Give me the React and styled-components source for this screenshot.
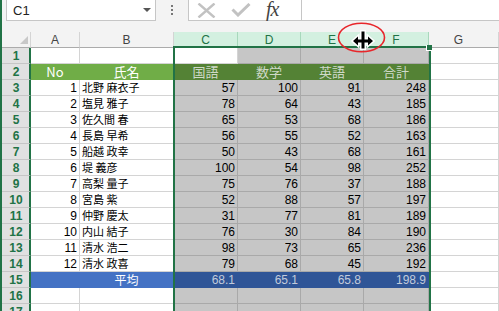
import React from 'react';
import styled, { createGlobalStyle } from 'styled-components';

// excel-ish palette
const XL_GREEN = '#217346';

const GlobalStyle = createGlobalStyle`
  html, body {
    margin: 0;
    padding: 0;
    background: #ffffff;
    overflow: hidden;
  }
`;

const students = [
  [1, '北野 麻衣子', 57, 100, 91, 248],
  [2, '塩見 雅子', 78, 64, 43, 185],
  [3, '佐久間 春', 65, 53, 68, 186],
  [4, '長島 早希', 56, 55, 52, 163],
  [5, '船越 政幸', 50, 43, 68, 161],
  [6, '堤 義彦', 100, 54, 98, 252],
  [7, '高梨 量子', 75, 76, 37, 188],
  [8, '宮島 紫', 52, 88, 57, 197],
  [9, '仲野 慶太', 31, 77, 81, 189],
  [10, '内山 結子', 76, 30, 84, 190],
  [11, '清水 浩二', 98, 73, 65, 236],
  [12, '清水 政喜', 79, 68, 45, 192],
];

const subjects = ['国語', '数学', '英語', '合計'];
const averages = ['68.1', '65.1', '65.8', '198.9'];
const columns = ['A', 'B', 'C', 'D', 'E', 'F', 'G'];
const selectedCols = ['C', 'D', 'E', 'F'];

const tones = {
  plain: { bg: '#ffffff', line: '#d4d4d4', fg: '#000000' },
  sel: { bg: '#c6c6c6', line: '#a9a9a9', fg: '#000000' },
  head: { bg: '#70ad47', line: '#70ad47', fg: '#ffffff' },
  headSel: { bg: '#548235', line: '#548235', fg: '#cfd9c8' },
  avg: { bg: '#4472c4', line: '#4472c4', fg: '#ffffff' },
  avgSel: { bg: '#2f5597', line: '#2f5597', fg: '#c2cbdb' },
};

const App = () => {
  const row = (n, cells) => (
    <React.Fragment key={n}>
      <RowHead>{n}</RowHead>
      {cells}
    </React.Fragment>
  );

  const selBlank = (n) =>
    [0, 1, 2, 3].map((i) => <Cell key={`${n}-s${i}`} $tone="sel" />);

  const rows = [];

  // row 1 : C1 is the active cell
  rows.push(
    row(1, [
      <Cell key="1a" />,
      <Cell key="1b" />,
      <Cell key="1c" />,
      <Cell key="1d" $tone="sel" />,
      <Cell key="1e" $tone="sel" />,
      <Cell key="1f" $tone="sel" />,
      <Cell key="1g" />,
    ])
  );

  // row 2 : headings
  rows.push(
    row(2, [
      <Cell key="2a" $tone="head" $align="center" $size="big">No</Cell>,
      <Cell key="2b" $tone="head" $align="center" $size="big">氏名</Cell>,
      ...subjects.map((s) => (
        <Cell key={`2-${s}`} $tone="headSel" $align="center" $size="big">{s}</Cell>
      )),
      <Cell key="2g" />,
    ])
  );

  students.forEach((s, i) => {
    const n = i + 3;
    rows.push(
      row(n, [
        <Cell key={`${n}a`} $align="right">{s[0]}</Cell>,
        <Cell key={`${n}b`} $size="jp">{s[1]}</Cell>,
        ...s.slice(2).map((v, j) => (
          <Cell key={`${n}-${j}`} $tone="sel" $align="right">{v}</Cell>
        )),
        <Cell key={`${n}g`} />,
      ])
    );
  });

  // row 15 : averages
  rows.push(
    row(15, [
      <Cell key="15a" $tone="avg" />,
      <Cell key="15b" $tone="avg" $align="center" $size="mid">平均</Cell>,
      ...averages.map((v) => (
        <Cell key={`15-${v}`} $tone="avgSel" $align="right">{v}</Cell>
      )),
      <Cell key="15g" />,
    ])
  );

  [16, 17].forEach((n) => {
    rows.push(
      row(n, [<Cell key={`${n}a`} />, <Cell key={`${n}b`} />, ...selBlank(n), <Cell key={`${n}g`} />])
    );
  });

  return (
    <>
      <GlobalStyle />
      <Window>
        <FormulaBar>
          <NameBox>
            C1
            <DropArrow />
          </NameBox>
          <Grip>
            <span />
            <span />
            <span />
          </Grip>
          <FxButtons>
            <svg width="19" height="15" viewBox="0 0 19 15">
              <path d="M1.5 0.5 L17.5 14.5 M17.5 0.5 L1.5 14.5" stroke="#c2c2c2" strokeWidth="2.4" fill="none" />
            </svg>
            <svg width="20" height="14" viewBox="0 0 20 14">
              <path d="M1.5 6.5 L7 12 L18.5 1" stroke="#c2c2c2" strokeWidth="3" fill="none" />
            </svg>
            <FxLabel>fx</FxLabel>
          </FxButtons>
          <FormulaInput />
        </FormulaBar>

        <Sheet>
          <Corner>
            <CornerTriangle />
          </Corner>
          {columns.map((c) => (
            <ColHead key={c} $sel={selectedCols.includes(c)} $last={c === 'G'}>
              {c}
            </ColHead>
          ))}
          {rows}

          <SelectionOutline>
            <FillHandle />
          </SelectionOutline>
        </Sheet>

        <ResizeCursor width="60" height="40" viewBox="0 0 60 40">
          <ellipse cx="29.5" cy="17.5" rx="23" ry="14.3" fill="none" stroke="#e8262b" strokeWidth="1.6" />
          <g stroke="#ffffff" strokeWidth="3" fill="#ffffff">
            <rect x="29.5" y="11.5" width="3" height="17" />
            <path d="M21 21 L26 16.5 L26 19.5 L36 19.5 L36 16.5 L41 21 L36 25.5 L36 22.5 L26 22.5 L26 25.5 Z" />
          </g>
          <rect x="29.5" y="11.5" width="3" height="17" fill="#000" />
          <path d="M21 21 L26 16.5 L26 19.5 L36 19.5 L36 16.5 L41 21 L36 25.5 L36 22.5 L26 22.5 L26 25.5 Z" fill="#000" />
        </ResizeCursor>
      </Window>
    </>
  );
};

export default App;

const Window = styled.div`
  position: relative;
  width: 499px;
  height: 311px;
  box-sizing: border-box;
  border-left: 2px solid ${XL_GREEN};
  background: #f3f3f3;
  overflow: hidden;
`;

const FormulaBar = styled.div`
  display: flex;
  align-items: stretch;
  height: 21px;
  padding-bottom: 11px;
  padding-left: 4px;
`;

const NameBox = styled.div`
  display: flex;
  align-items: center;
  width: 150px;
  box-sizing: border-box;
  padding-left: 6px;
  background: #fff;
  border: 1px solid #c6c6c6;
  border-top: none;
  font-family: 'Liberation Sans', Arial, sans-serif;
  font-size: 13px;
  line-height: 1;
  color: #222;
`;

const DropArrow = styled.span`
  margin-left: auto;
  margin-right: 4px;
  width: 0;
  height: 0;
  border-left: 4px solid transparent;
  border-right: 4px solid transparent;
  border-top: 4px solid #555;
`;

const Grip = styled.div`
  display: flex;
  flex-direction: column;
  justify-content: center;
  gap: 2px;
  width: 32px;
  align-items: center;
  padding-bottom: 1px;

  span {
    width: 2px;
    height: 2px;
    background: #777;
  }
`;

const FxButtons = styled.div`
  display: flex;
  align-items: center;
  gap: 15px;
  width: 114px;
  box-sizing: border-box;
  padding-left: 8px;
  background: #fff;
  border: 1px solid #c6c6c6;
  border-top: none;
`;

const FxLabel = styled.span`
  font-family: 'Liberation Serif', 'Times New Roman', serif;
  font-style: italic;
  font-size: 20px;
  line-height: 1;
  color: #444;
  margin-top: -2px;
  letter-spacing: -1px;
`;

const FormulaInput = styled.div`
  flex: 1;
  background: #fff;
  border-bottom: 1px solid #c6c6c6;
`;

const Sheet = styled.div`
  position: relative;
  display: grid;
  grid-template-columns: 29px 49px 94px 64px 63px 63px 65px 1fr;
  grid-auto-rows: 16px;
  background: #fff;
`;

const Corner = styled.div`
  display: flex;
  justify-content: flex-end;
  align-items: flex-end;
  padding: 0 2px 3px 0;
  background: #f3f3f3;
  border-right: 1px solid #d4d4d4;
  border-bottom: 1px solid #ababab;
`;

const CornerTriangle = styled.span`
  width: 0;
  height: 0;
  border-left: 8px solid transparent;
  border-bottom: 8px solid #c8c8c8;
`;

const ColHead = styled.div`
  display: flex;
  align-items: center;
  justify-content: center;
  box-sizing: border-box;
  padding-right: ${(p) => (p.$last ? '10px' : '0')};
  background: ${(p) => (p.$sel ? '#d3f0e0' : '#f3f3f3')};
  color: ${(p) => (p.$sel ? XL_GREEN : '#444')};
  border-right: 1px solid ${(p) => (p.$sel ? '#a8d8bc' : '#d4d4d4')};
  border-bottom: 1px solid #ababab;
  font-family: 'Liberation Sans', Arial, sans-serif;
  font-size: 12px;
  line-height: 1;
`;

const RowHead = styled.div`
  display: flex;
  align-items: center;
  justify-content: center;
  box-sizing: border-box;
  background: #e1e1e1;
  color: ${XL_GREEN};
  border-right: 2px solid ${XL_GREEN};
  border-bottom: 1px solid #c6c6c6;
  font-family: 'Liberation Sans', Arial, sans-serif;
  font-weight: bold;
  font-size: 12px;
  line-height: 1;
  padding-left: 1px;
`;

const sizes = {
  num: "12px/1 'Liberation Sans', Arial, 'Noto Sans CJK JP', sans-serif",
  jp: "11px/1 'Noto Sans CJK JP', sans-serif",
  mid: "12px/1 'Noto Sans CJK JP', sans-serif",
  big: "13px/1 'Noto Sans CJK JP', sans-serif",
};

const Cell = styled.div`
  display: flex;
  align-items: center;
  justify-content: ${(p) =>
    p.$align === 'right' ? 'flex-end' : p.$align === 'center' ? 'center' : 'flex-start'};
  box-sizing: border-box;
  padding: 0 2px;
  white-space: nowrap;
  background: ${(p) => tones[p.$tone || 'plain'].bg};
  color: ${(p) => tones[p.$tone || 'plain'].fg};
  border-right: 1px solid ${(p) => tones[p.$tone || 'plain'].line};
  border-bottom: 1px solid ${(p) => tones[p.$tone || 'plain'].line};
  font: ${(p) => sizes[p.$size || 'num']};
`;

const SelectionOutline = styled.div`
  position: absolute;
  left: 171px;
  top: 14px;
  width: 258px;
  height: 300px;
  box-sizing: border-box;
  border: 2px solid ${XL_GREEN};
  border-bottom: none;
  pointer-events: none;
`;

const FillHandle = styled.span`
  position: absolute;
  right: -3px;
  top: -3px;
  width: 5px;
  height: 5px;
  background: ${XL_GREEN};
  border-left: 1px solid #fff;
  border-bottom: 1px solid #fff;
`;

const ResizeCursor = styled.svg`
  position: absolute;
  left: 330px;
  top: 20px;
`;
